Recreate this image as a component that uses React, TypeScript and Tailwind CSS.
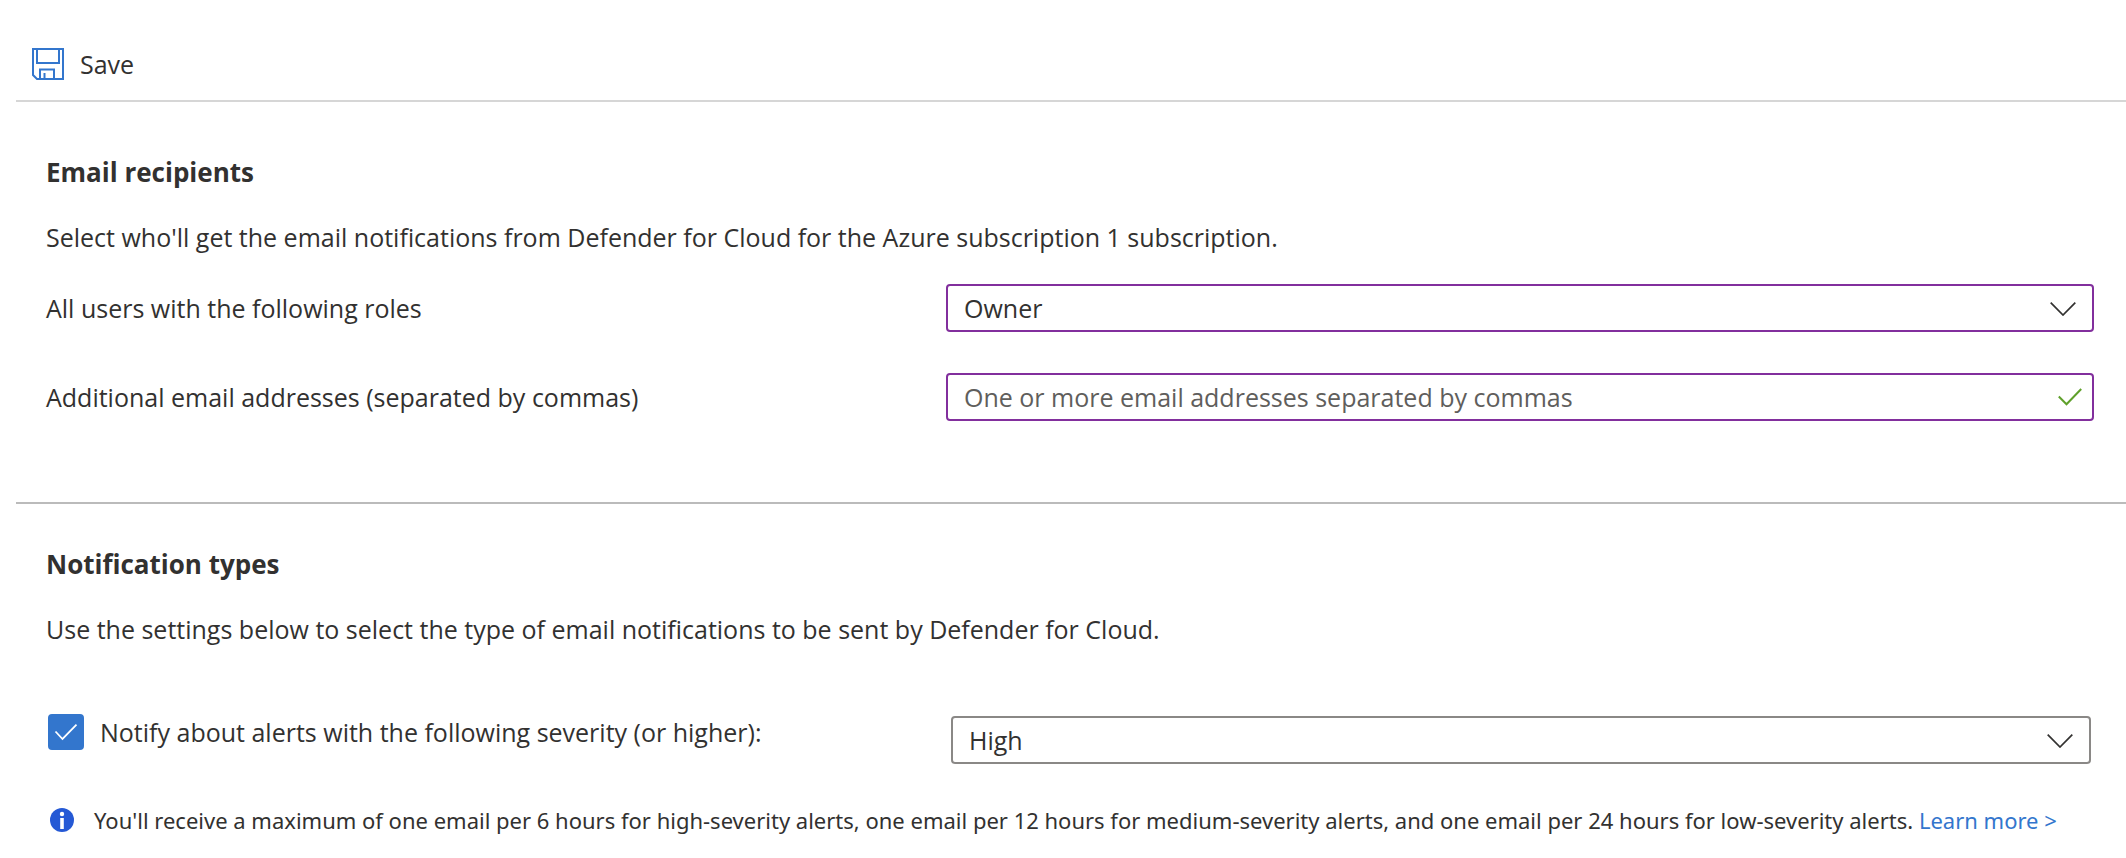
import { useState, type ReactNode } from "react";

const FIELD_CLASS =
  "block h-12 w-full appearance-none rounded-sm border-2 bg-white pl-4 pr-16 text-[25px] leading-8 text-[#323130] outline-none placeholder:text-[#605e5c] placeholder:opacity-100";

function SaveIcon() {
  return (
    <svg viewBox="0 0 32 32" className="h-8 w-8 shrink-0" fill="none" stroke="#3376cd" strokeWidth="2" aria-hidden="true">
      <path d="M1 1H31V31H5L1 27Z" />
      <path d="M5 1V15H27V1" />
      <path d="M8 31V21.500H22V31" />
      <path d="M12.500 25V31" />
    </svg>
  );
}

function ChevronIcon() {
  return (
    <svg
      viewBox="0 0 26 14"
      className="pointer-events-none absolute right-[18px] top-[18px] h-[14px] w-[26px]"
      fill="none"
      stroke="#323130"
      strokeWidth="1.7"
      aria-hidden="true"
    >
      <path d="M0.700 0.700L13 13L25.300 0.700" />
    </svg>
  );
}

function ValidIcon() {
  return (
    <svg
      viewBox="0 0 24 18"
      className="pointer-events-none absolute right-3 top-[15px] h-[18px] w-6"
      fill="none"
      stroke="#5fa02b"
      strokeWidth="2"
      aria-hidden="true"
    >
      <path d="M0.800 8.500L8.500 16.200L23.200 1" />
    </svg>
  );
}

function InfoIcon() {
  return (
    <svg viewBox="0 0 24 24" className="h-6 w-6 shrink-0" aria-hidden="true">
      <circle cx="12" cy="12" r="12" fill="#2559d5" />
      <circle cx="12" cy="6" r="2.200" fill="#fff" />
      <path d="M10.200 10H13.800V21H10.200Z" fill="#fff" />
    </svg>
  );
}

function Dropdown({ id, label, options, borderClass }: { id: string; label?: string; options: string[]; borderClass: string }) {
  return (
    <div className="relative">
      <select id={id} aria-label={label} className={`${FIELD_CLASS} ${borderClass}`} defaultValue={options[0]}>
        {options.map((option) => (
          <option key={option}>{option}</option>
        ))}
      </select>
      <ChevronIcon />
    </div>
  );
}

function FieldRow({ id, label, children }: { id: string; label: string; children: ReactNode }) {
  return (
    <div className="grid grid-cols-[900fr_1148fr] items-center">
      <label htmlFor={id}>{label}</label>
      {children}
    </div>
  );
}

export default function App() {
  const [notify, setNotify] = useState(true);

  return (
    <main className="bg-white pl-4 font-['Open_Sans','Noto_Sans',sans-serif] text-[25px] leading-8 text-[#323130]">
      <header className="border-b-2 border-[#d6d6d6] px-4 pb-5 pt-12">
        <button type="button" className="flex items-center gap-4">
          <SaveIcon />
          <span>Save</span>
        </button>
      </header>

      <section className="border-b-2 border-[#bbbbbb] pb-[81px] pl-[30px] pr-8 pt-[54px]">
        <h2 className="text-[26px] font-bold leading-8">Email recipients</h2>
        <p className="mt-[33px]">
          Select who'll get the email notifications from Defender for Cloud for the Azure subscription 1 subscription.
        </p>
        <div className="mt-[31px] flex flex-col gap-[41px]">
          <FieldRow id="roles" label="All users with the following roles">
            <Dropdown
              id="roles"
              options={["Owner", "Contributor", "Account admin", "Service admin"]}
              borderClass="border-[#822f9d]"
            />
          </FieldRow>
          <FieldRow id="emails" label="Additional email addresses (separated by commas)">
            <div className="relative">
              <input
                id="emails"
                type="text"
                placeholder="One or more email addresses separated by commas"
                className={`${FIELD_CLASS} border-[#822f9d]`}
              />
              <ValidIcon />
            </div>
          </FieldRow>
        </div>
      </section>

      <section className="pl-[30px] pt-11">
        <h2 className="text-[26px] font-bold leading-8">Notification types</h2>
        <p className="mt-[33px]">
          Use the settings below to select the type of email notifications to be sent by Defender for Cloud.
        </p>
        <div className="mt-[69px] grid grid-cols-[903fr_1140fr] items-start pl-0.5 pr-[35px]">
          <label className="flex items-center gap-4">
            <span className="relative block h-9 w-9 shrink-0">
              <input
                type="checkbox"
                checked={notify}
                onChange={(event) => setNotify(event.target.checked)}
                className="block h-9 w-9 appearance-none rounded-sm border-2 border-[#323130] bg-white checked:border-[#3376cd] checked:bg-[#3376cd]"
              />
              <svg
                viewBox="0 0 36 36"
                className="pointer-events-none absolute inset-0 h-9 w-9"
                fill="none"
                stroke="#fff"
                strokeWidth="1.8"
                aria-hidden="true"
              >
                <path d="M7.500 17.500L14.500 25L28.500 10.700" />
              </svg>
            </span>
            <span>Notify about alerts with the following severity (or higher):</span>
          </label>
          <div className="pt-0.5">
            <Dropdown
              id="severity"
              label="Minimum alert severity"
              options={["High", "Medium", "Low"]}
              borderClass="border-[#8a8886]"
            />
          </div>
        </div>
        <div className="mt-10 flex items-center gap-5 pl-1 font-['Noto_Sans','Open_Sans',sans-serif] text-[22px]">
          <InfoIcon />
          <p>
            You'll receive a maximum of one email per 6 hours for high-severity alerts, one email per 12 hours for
            medium-severity alerts, and one email per 24 hours for low-severity alerts.{" "}
            <a href="#learn-more" className="text-[#3376cd]">
              Learn more &gt;
            </a>
          </p>
        </div>
      </section>
    </main>
  );
}
